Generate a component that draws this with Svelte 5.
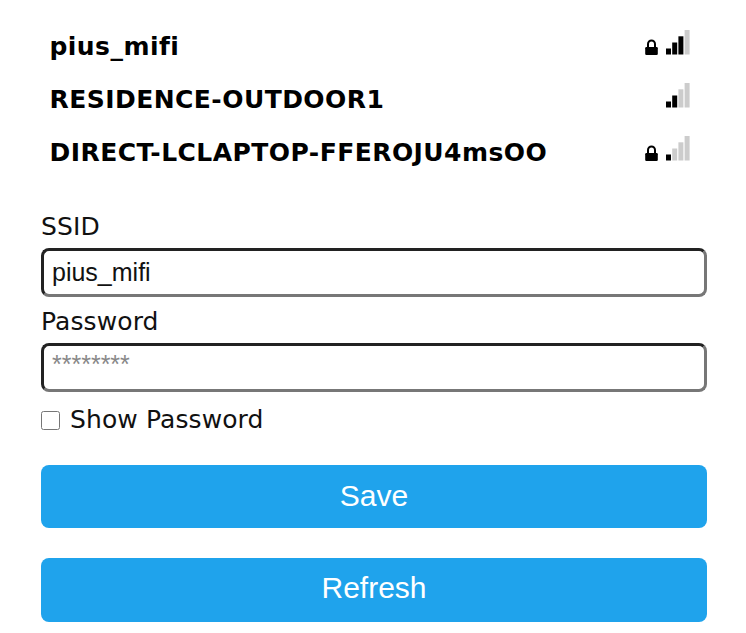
<script>
  let networks = [
    { ssid: "pius_mifi", locked: true, level: 3 },
    { ssid: "RESIDENCE-OUTDOOR1", locked: false, level: 2 },
    { ssid: "DIRECT-LCLAPTOP-FFEROJU4msOO", locked: true, level: 1 }
  ];
  let ssid = $state("pius_mifi");
  let show = $state(false);
  const bars = [
    { x: 0, y: 18.5, h: 6 },
    { x: 6.2, y: 12.5, h: 12 },
    { x: 12.4, y: 6.3, h: 18.2 },
    { x: 18.6, y: 0, h: 24.5 }
  ];
</script>

<div class="page">
  <div class="list">
    {#each networks as n}
      <div class="row">
        <a href="#top" class="name">{n.ssid}</a>
        <div class="status">
          {#if n.locked}
            <svg class="lock" width="13" height="16" viewBox="0 0 13 16">
              <path d="M3 9V5a3.5 3.5 0 0 1 7 0v4" fill="none" stroke="#000" stroke-width="2" />
              <rect x="0.2" y="8" width="12.6" height="8" rx="1.2" fill="#000" />
            </svg>
          {/if}
          <svg class="signal" width="24" height="25" viewBox="0 0 24 25">
            {#each bars as b, i}
              <rect x={b.x} y={b.y} width="5" height={b.h} fill={i < n.level ? "#000" : "#ccc"} />
            {/each}
          </svg>
        </div>
      </div>
    {/each}
  </div>

  <form class="form">
    <label for="ssid">SSID</label>
    <input id="ssid" type="text" bind:value={ssid} />
    <label for="pw">Password</label>
    <input id="pw" type={show ? "text" : "password"} placeholder="********" />
    <div class="show">
      <input id="show" type="checkbox" bind:checked={show} />
      <label for="show">Show Password</label>
    </div>
    <button type="button" class="save">Save</button>
    <button type="button" class="refresh">Refresh</button>
  </form>
</div>

<style>
  :global(body) {
    margin: 0;
    background: #fff;
  }

  .page {
    width: 666px;
    padding: 29.5px 0 0 41px;
    font-family: "DejaVu Sans", Verdana, sans-serif;
    color: #000;
  }

  .list {
    display: flex;
    flex-direction: column;
    gap: 19px;
    padding-left: 8.5px;
  }

  .row {
    display: flex;
    align-items: flex-start;
    justify-content: space-between;
    height: 34px;
    padding-right: 17px;
  }

  .name {
    font-size: 25px;
    line-height: 34px;
    letter-spacing: 0.45px;
    font-weight: 700;
    color: #000;
    text-decoration: none;
    transform: translateY(-0.5px);
  }

  .status {
    display: flex;
    align-items: flex-end;
    gap: 8.5px;
  }

  .lock, .signal {
    display: block;
  }

  .form {
    display: flex;
    flex-direction: column;
    margin-top: 41.5px;
  }

  label {
    font-size: 25px;
    line-height: 32px;
    letter-spacing: 0.1px;
    color: #111;
    margin-bottom: 5px;
  }

  input[type="text"], input[type="password"] {
    box-sizing: border-box;
    width: 100%;
    height: 49px;
    padding: 0 8px;
    margin: 0 0 9px;
    border: 3px solid #444;
    border-color: #222 #777 #777 #222;
    border-radius: 8px;
    font-family: "Liberation Sans", Arial, sans-serif;
    font-size: 25px;
    color: #111;
    outline: none;
  }

  #pw {
    padding-bottom: 6px;
  }

  input::placeholder {
    color: #888;
  }

  .show {
    display: flex;
    align-items: center;
    gap: 10px;
    height: 38px;
  }

  .show label {
    margin: 0;
  }

  .show input {
    width: 19px;
    height: 19px;
    margin: 0;
  }

  button {
    height: 63px;
    border: 0;
    border-radius: 8px;
    background: #1fa3ec;
    color: #fff;
    font-family: "Liberation Sans", Arial, sans-serif;
    font-size: 30px;
  }

  .save {
    margin-top: 26px;
    padding-bottom: 2px;
  }

  .refresh {
    margin-top: 30px;
    height: 64px;
    padding-bottom: 5px;
  }
</style>
